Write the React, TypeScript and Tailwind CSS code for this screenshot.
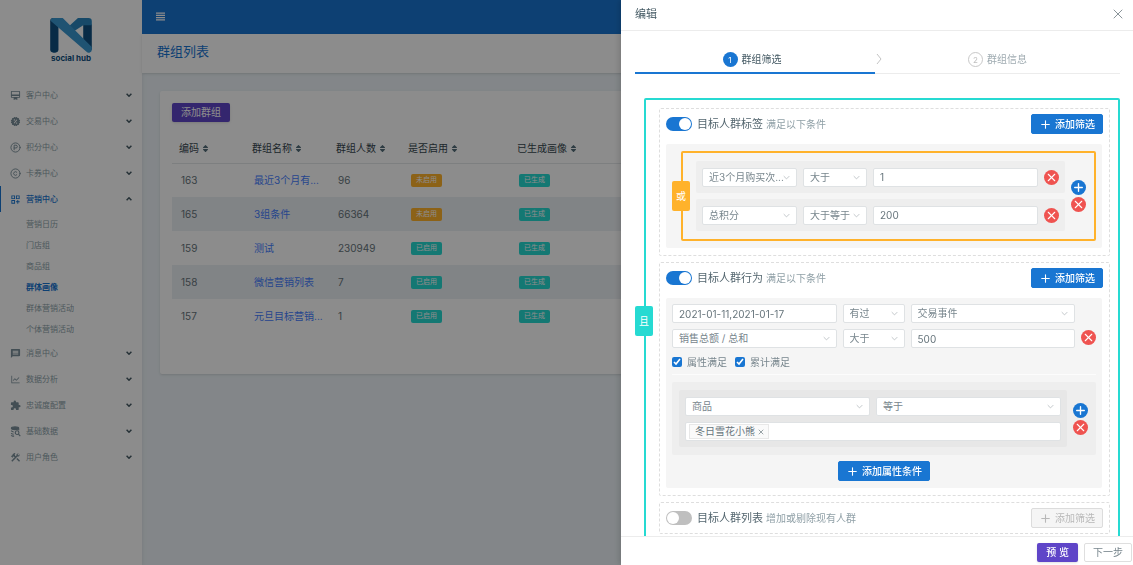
import { useState } from "react";
import type { ReactNode } from "react";
import clsx from "clsx";
import { CircleParking, Copyright, Plus, X } from "lucide-react";
import { AiOutlineLineChart } from "react-icons/ai";
import { BiSolidOffer } from "react-icons/bi";
import { FaSort } from "react-icons/fa";
import {
  MdConstruction,
  MdExtension,
  MdMessage,
  MdOutlineCardMembership,
  MdOutlineDashboardCustomize,
} from "react-icons/md";

type MenuItem = {
  label: string;
  icon: ReactNode;
  children?: string[];
};

const MENU: MenuItem[] = [
  { label: "客户中心", icon: <MdOutlineCardMembership className="size-[11px]" /> },
  { label: "交易中心", icon: <BiSolidOffer className="size-[11px]" /> },
  { label: "积分中心", icon: <CircleParking className="size-[11px]" /> },
  { label: "卡券中心", icon: <Copyright className="size-[11px]" /> },
  {
    label: "营销中心",
    icon: <MdOutlineDashboardCustomize className="size-[11px]" />,
    children: ["营销日历", "门店组", "商品组", "群体画像", "群体营销活动", "个体营销活动"],
  },
  { label: "消息中心", icon: <MdMessage className="size-[11px]" /> },
  { label: "数据分析", icon: <AiOutlineLineChart className="size-[11px]" /> },
  { label: "忠诚度配置", icon: <MdExtension className="size-[11px]" /> },
  { label: "基础数据", icon: <DatabaseSearch /> },
  { label: "用户角色", icon: <MdConstruction className="size-[11px]" /> },
];

const COLUMNS = ["编码", "群组名称", "群组人数", "是否启用", "已生成画像"];

const GROUPS = [
  { id: 163, name: "最近3个月有...", count: 96, enabled: false },
  { id: 165, name: "3组条件", count: 66364, enabled: false },
  { id: 159, name: "测试", count: 230949, enabled: true },
  { id: 158, name: "微信营销列表", count: 7, enabled: true },
  { id: 157, name: "元旦目标营销...", count: 1, enabled: true },
];

function DatabaseSearch() {
  return (
    <svg viewBox="0 0 24 24" className="size-[11px]" fill="none" stroke="currentColor" strokeWidth="2.4">
      <ellipse cx="11" cy="5" rx="8" ry="3" fill="currentColor" />
      <path d="M3 10c0 1.500 2 2.600 5 3M3 15c0 1.500 2 2.600 5 3M3 20c0 1 2 2 6 2M19 6v3" />
      <circle cx="15.500" cy="14.500" r="4" />
      <path d="m18.500 17.500 4 4.500" />
    </svg>
  );
}

function Logo() {
  return (
    <a href="#" className="flex flex-col items-center pt-[18px]">
      <svg viewBox="0 0 126 106" className="h-[35px] w-[42px]" aria-hidden="true">
        <rect x="0" y="0" width="25" height="105" rx="10" fill="#0f4f80" />
        <path d="M100 20h26v78l-26-30z" fill="#0f4f80" />
        <path d="M84 0h32a10 10 0 0 1 10 10v12h-26L72 40 56 26z" fill="#2b86bd" />
        <path d="M10 0h28l88 88v8a9 9 0 0 1-16 6L1 8q1-8 9-8z" fill="#3a97d0" />
      </svg>
      <span className="text-[8px] leading-[10px] font-bold text-[#0f4f80]">social hub</span>
    </a>
  );
}

function Caret({ up, className }: { up?: boolean; className?: string }) {
  return (
    <svg viewBox="0 0 10 6" className={className} fill="none" stroke="currentColor" aria-hidden="true">
      <path d={up ? "M1 5l4-4 4 4" : "M1 1l4 4 4-4"} />
    </svg>
  );
}

function Sidebar() {
  return (
    <aside className="flex w-[142px] shrink-0 flex-col bg-white shadow-md">
      <Logo />
      <nav className="mt-[19px] text-[8px] text-[#8c9fa9]">
        {MENU.map((item) => (
          <div key={item.label}>
            <a
              href="#"
              className={clsx(
                "flex h-[26px] items-center gap-[5px] border-l pr-2.5 pl-[9px]",
                item.children ? "border-[#1976d2] font-medium text-[#1976d2]" : "border-transparent",
              )}
            >
              <span className={item.children ? "" : "text-[#7a8f9a]"}>{item.icon}</span>
              <span className="flex-1">{item.label}</span>
              <Caret up={!!item.children} className="h-1 w-[6px] stroke-[2.5] text-[#455a64]" />
            </a>
            {item.children && (
              <div className="py-px">
                {item.children.map((child) => (
                  <a
                    key={child}
                    href="#"
                    className={clsx(
                      "flex h-[21px] items-center pl-[26px]",
                      child === "群体画像" && "font-bold text-[#1976d2]",
                    )}
                  >
                    {child}
                  </a>
                ))}
              </div>
            )}
          </div>
        ))}
      </nav>
    </aside>
  );
}

function Badge({ on, children }: { on: boolean; children: ReactNode }) {
  return (
    <span
      className={clsx(
        "flex h-[13px] w-[31px] items-center justify-center rounded-[2px] text-[7px] text-white",
        on ? "bg-[#26dad2]" : "bg-[#ffb22b]",
      )}
    >
      {children}
    </span>
  );
}

function GroupList() {
  return (
    <section className="m-[18px] mb-0 rounded-[2px] bg-white p-3 pb-[41px] shadow-sm">
      <button className="flex h-[19px] items-center rounded-[2px] bg-[#5f45c8] px-[9px] text-[10px] text-white shadow">
        添加群组
      </button>
      <table className="mt-3 w-full table-fixed text-[10px] leading-4">
        <colgroup>
          <col className="w-[73px]" />
          <col className="w-[84px]" />
          <col className="w-[72px]" />
          <col className="w-[109px]" />
          <col />
        </colgroup>
        <thead>
          <tr className="h-[29px] border-b border-[#e4e7ea] text-left text-[#37474f]">
            {COLUMNS.map((name) => (
              <th key={name} className="pl-[7px] font-normal">
                <span className="flex items-center gap-0.5">
                  {name}
                  <FaSort className="size-[9px] text-[#546e7a]" />
                </span>
              </th>
            ))}
          </tr>
        </thead>
        <tbody className="text-[#67757c]">
          {GROUPS.map((g) => (
            <tr key={g.id} className="h-[34px] even:bg-[#ecf0f4]">
              <td className="pl-[9px]">{g.id}</td>
              <td className="pl-[9px]">
                <a href="#" className="whitespace-nowrap text-[#4680ff]">
                  {g.name}
                </a>
              </td>
              <td className="pl-[9px]">{g.count}</td>
              <td className="pl-[10px]">
                <Badge on={g.enabled}>{g.enabled ? "已启用" : "未启用"}</Badge>
              </td>
              <td className="pl-[9px]">
                <Badge on>已生成</Badge>
              </td>
            </tr>
          ))}
        </tbody>
      </table>
    </section>
  );
}

function Select({ label, value, className }: { label: string; value: string; className?: string }) {
  return (
    <div className={clsx("relative h-[19px]", className)}>
      <select
        aria-label={label}
        className="block h-full w-full appearance-none rounded-[2px] border border-[#dfe2e4] bg-white pr-3 pl-1.5 text-[10px] text-[#78868d]"
      >
        <option>{value}</option>
      </select>
      <Caret className="pointer-events-none absolute top-[7px] right-[7px] h-[5px] w-[7px] text-[#a9b0b4]" />
    </div>
  );
}

function TextInput({ label, value }: { label: string; value: string }) {
  return (
    <input
      aria-label={label}
      defaultValue={value}
      className="h-[19px] w-full min-w-0 rounded-[2px] border border-[#dfe2e4] bg-white px-1.5 text-[10px] text-[#67757c]"
    />
  );
}

function RoundButton({ kind }: { kind: "add" | "remove" }) {
  const Icon = kind === "add" ? Plus : X;
  return (
    <button
      aria-label={kind === "add" ? "添加" : "删除"}
      className={clsx(
        "flex size-[15px] shrink-0 items-center justify-center rounded-full text-white",
        kind === "add" ? "bg-[#1976d2]" : "bg-[#ef5350]",
      )}
    >
      <Icon className={kind === "add" ? "size-[13px] stroke-[2.5]" : "size-[13px] stroke-2"} />
    </button>
  );
}

function AddButton({ children, disabled }: { children: ReactNode; disabled?: boolean }) {
  return (
    <button
      disabled={disabled}
      className={clsx(
        "flex h-5 items-center gap-[3px] rounded-[2px] border px-[7px] text-[10px]",
        disabled
          ? "border-[#dcdcdc] bg-[#f5f5f5] text-[#b8b8b8]"
          : "border-[#1976d2] bg-[#1976d2] font-medium text-white",
      )}
    >
      <Plus className="size-[13px]" />
      {children}
    </button>
  );
}

// Conditions joined by one operator, the operator sits on the left border
function LogicBox({ tone, operator, children }: { tone: "teal" | "amber"; operator: string; children: ReactNode }) {
  const teal = tone === "teal";
  return (
    <div
      className={clsx(
        "relative rounded-[2px] border-2 py-2 pr-2 pl-[13px]",
        teal ? "border-[#26dad2]" : "border-[#ffb22b]",
      )}
    >
      <span
        className={clsx(
          "absolute top-1/2 -left-[11px] flex h-[30px] w-[18px] -translate-y-1/2 items-center justify-center rounded-[2px] text-[10px] text-white",
          teal ? "bg-[#26dad2]" : "bg-[#ffb22b]",
        )}
      >
        {operator}
      </span>
      {children}
    </div>
  );
}

function Section({
  title,
  hint,
  on,
  children,
}: {
  title: string;
  hint: string;
  on: boolean;
  children?: ReactNode;
}) {
  const [checked, setChecked] = useState(on);
  return (
    <section className="rounded-[2px] border border-dashed border-[#dedede] px-1.5 py-[5px]">
      <header className="flex items-center">
        <label className="flex flex-1 items-center">
          <input
            type="checkbox"
            role="switch"
            checked={checked}
            onChange={(e) => setChecked(e.target.checked)}
            className="sr-only"
          />
          <span
            className={clsx(
              "flex h-[14px] w-[26px] items-center rounded-full p-px",
              checked ? "justify-end bg-[#1976d2]" : "bg-[#bfbfbf]",
            )}
          >
            <span className="size-3 rounded-full bg-white" />
          </span>
          <span className="ml-[5px] text-[11px] text-[#54666f]">{title}</span>
          <span className="ml-[3px] text-[10px] text-[#90a0a7]">{hint}</span>
        </label>
        <AddButton disabled={!on}>添加筛选</AddButton>
      </header>
      {children}
    </section>
  );
}

function TagRow({ tag, op, value }: { tag: string; op: string; value: string }) {
  return (
    <div className="grid h-8 grid-cols-[95px_64px_1fr_15px] items-center gap-1.5 rounded-[2px] bg-[#eeeeee] px-1.5">
      <Select label="标签" value={tag} />
      <Select label="条件" value={op} />
      <TextInput label="值" value={value} />
      <RoundButton kind="remove" />
    </div>
  );
}

function Check({ label }: { label: string }) {
  return (
    <label className="flex items-center gap-[5px]">
      <input type="checkbox" defaultChecked className="size-2.5 accent-[#1976d2]" />
      {label}
    </label>
  );
}

function Steps() {
  return (
    <ol className="grid grid-cols-[240fr_245fr] text-[10px]">
      <li className="flex h-[43px] items-center justify-center gap-1 border-b-2 border-[#1976d2] pt-4 pr-1.5 text-[#455a64]">
        <span className="flex size-[15px] items-center justify-center rounded-full bg-[#1976d2] text-[8px] text-white">
          1
        </span>
        群组筛选
      </li>
      <li className="relative flex h-[43px] items-center justify-center gap-1 border-b border-[#ececec] pt-[15px] text-[#9fabb1]">
        <svg
          viewBox="0 0 6 10"
          className="absolute top-[23px] left-0 h-2.5 w-2 text-[#c4c4c4]"
          fill="none"
          stroke="currentColor"
          aria-hidden="true"
        >
          <path d="M1 0l4 5-4 5" />
        </svg>
        <span className="flex size-[15px] items-center justify-center rounded-full border border-[#c8c8c8] text-[8px] text-[#c0c0c0]">
          2
        </span>
        群组信息
      </li>
    </ol>
  );
}

function EditDrawer() {
  return (
    <div
      role="dialog"
      aria-label="编辑"
      className="fixed inset-y-0 right-0 flex w-[512px] flex-col bg-white shadow-[-2px_0_6px_rgba(0,0,0,0.15)]"
    >
      <header className="flex h-[31px] shrink-0 items-center justify-between border-b border-[#ececec] pr-[7px] pb-0.5 pl-3.5 text-[11px] text-[#455a64]">
        编辑
        <button aria-label="关闭" className="text-[#8a9499]">
          <X className="size-4 stroke-[1.5]" />
        </button>
      </header>

      <div className="min-h-0 flex-1 overflow-y-auto pr-[13px] pl-3.5 [scrollbar-width:none]">
        <Steps />
        <div className="mt-6 ml-[9px]">
          <LogicBox tone="teal" operator="且">
            <div className="flex flex-col gap-1.5">
              <Section title="目标人群标签" hint="满足以下条件" on>
                <div className="mt-2.5 mr-px mb-0.5 rounded-[2px] bg-[#f5f5f5] py-[7px] pr-1.5 pl-[15px]">
                  <LogicBox tone="amber" operator="或">
                    <div className="flex items-center gap-1.5">
                      <div className="flex flex-1 flex-col gap-1.5">
                        <TagRow tag="近3个月购买次..." op="大于" value="1" />
                        <TagRow tag="总积分" op="大于等于" value="200" />
                      </div>
                      <div className="flex flex-col gap-0.5">
                        <RoundButton kind="add" />
                        <RoundButton kind="remove" />
                      </div>
                    </div>
                  </LogicBox>
                </div>
              </Section>

              <Section title="目标人群行为" hint="满足以下条件" on>
                <div className="mt-2.5 mr-px mb-0.5 rounded-[2px] bg-[#f5f5f5] px-1.5 pt-1.5 pb-[7px]">
                  <div className="flex items-center gap-1.5">
                    <div className="grid flex-1 grid-cols-[1fr_62px_1fr] gap-1.5">
                      <TextInput label="日期" value="2021-01-11,2021-01-17" />
                      <Select label="是否" value="有过" />
                      <Select label="事件" value="交易事件" />
                      <Select label="指标" value="销售总额 / 总和" />
                      <Select label="条件" value="大于" />
                      <TextInput label="数值" value="500" />
                      <div className="col-span-3 flex h-4 items-center gap-2 text-[10px] text-[#78868d]">
                        <Check label="属性满足" />
                        <Check label="累计满足" />
                      </div>
                    </div>
                    <RoundButton kind="remove" />
                  </div>

                  <hr className="mt-1 border-[#fcfcfc]" />

                  <div className="mt-[7px] flex items-center gap-1.5 rounded-[2px] bg-[#eeeeee] py-2 pr-2 pl-[7px]">
                    <div className="grid flex-1 grid-cols-2 gap-1.5 rounded-[2px] bg-[#e7e7e7] px-1.5 pt-[7px] pb-1.5">
                      <Select label="属性" value="商品" />
                      <Select label="条件" value="等于" />
                      <div className="col-span-2 flex h-[19px] items-center rounded-[2px] border border-[#dfe2e4] bg-white px-[3px]">
                        <span className="flex h-[15px] items-center gap-0.5 border border-[#e8e8e8] bg-[#fafafa] pr-[3px] pl-[5px] text-[10px] text-[#67757c]">
                          冬日雪花小熊
                          <button aria-label="移除">
                            <X className="size-2" />
                          </button>
                        </span>
                        <input aria-label="商品" className="min-w-0 flex-1 text-[10px] outline-none" />
                      </div>
                    </div>
                    <div className="flex flex-col gap-0.5">
                      <RoundButton kind="add" />
                      <RoundButton kind="remove" />
                    </div>
                  </div>

                  <div className="mt-1.5 flex justify-center">
                    <AddButton>添加属性条件</AddButton>
                  </div>
                </div>
              </Section>

              <Section title="目标人群列表" hint="增加或剔除现有人群" on={false} />
            </div>
          </LogicBox>
        </div>
      </div>

      <footer className="flex h-[29px] shrink-0 items-center justify-end gap-1.5 border-t border-[#ececec] pt-0.5 pr-px text-[10px]">
        <button className="h-[19px] rounded-[2px] bg-[#5f45c8] px-[9px] font-medium text-white shadow">预 览</button>
        <button className="h-[19px] rounded-[2px] border border-[#dfdfdf] px-2 text-[#78868d]">下一步</button>
      </footer>
    </div>
  );
}

export default function App() {
  return (
    <div className="flex min-h-screen bg-[#eef5f9] font-['Inter','Noto_Sans_CJK_SC',sans-serif]">
      <Sidebar />
      <main className="min-w-0 flex-1">
        <header className="flex h-[34px] items-center bg-[#1976d2] px-3.5 pb-0.5 text-white">
          <button aria-label="菜单">
            <svg viewBox="0 0 9 9" className="size-[9px]" fill="currentColor" aria-hidden="true">
              <path d="M0 .5h9v1.300H0zM0 2.700h9V4H0zM0 5h9v1.300H0zM0 7.200h9v1.300H0z" />
            </svg>
          </button>
        </header>
        <div className="flex h-[39px] items-center bg-white px-[15px] pb-1 shadow-sm">
          <h1 className="text-[13px] text-[#1976d2]">群组列表</h1>
        </div>
        <GroupList />
      </main>
      <div className="fixed inset-0 bg-black/45" />
      <EditDrawer />
    </div>
  );
}
